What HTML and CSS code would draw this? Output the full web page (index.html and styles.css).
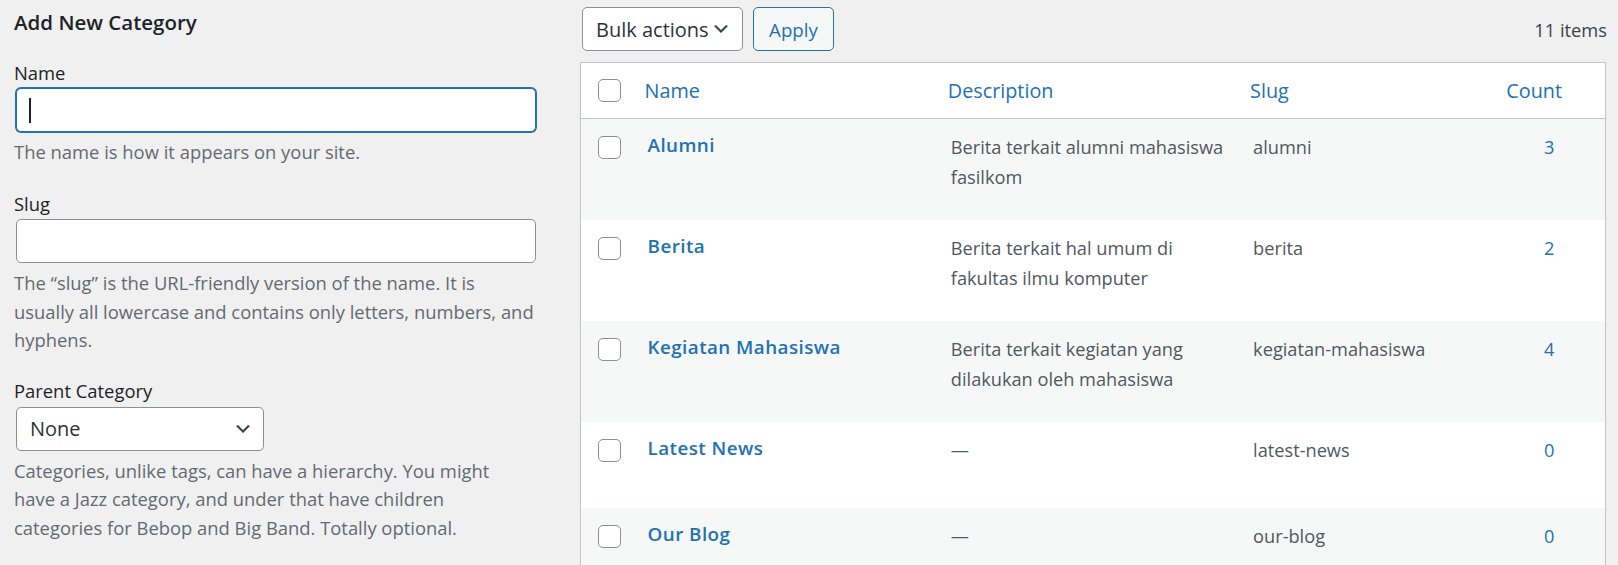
FILE: index.html
```html
<!DOCTYPE html>
<html lang="en">
<head>
<meta charset="utf-8">
<title>Categories</title>
<link rel="stylesheet" href="styles.css">
</head>
<body>
<div class="page">
  <div class="col-left">
    <h2 class="form-title">Add New Category</h2>
    <div class="field">
      <label class="field-label">Name</label>
      <div class="text-input is-focused"><span class="caret"></span></div>
      <p class="desc">The name is how it appears on your site.</p>
    </div>
    <div class="field">
      <label class="field-label">Slug</label>
      <div class="text-input"></div>
      <p class="desc">The “slug” is the URL-friendly version of the name. It is<br>usually all lowercase and contains only letters, numbers, and<br>hyphens.</p>
    </div>
    <div class="field">
      <label class="field-label">Parent Category</label>
      <div class="select select-parent">
        <span>None</span>
        <svg class="chev" viewBox="0 0 20 20" width="20" height="20"><path d="M5 6l5 5 5-5 2 1-7 7-7-7z"/></svg>
      </div>
      <p class="desc">Categories, unlike tags, can have a hierarchy. You might<br>have a Jazz category, and under that have children<br>categories for Bebop and Big Band. Totally optional.</p>
    </div>
  </div>

  <div class="col-right">
    <div class="tablenav">
      <div class="select select-bulk">
        <span>Bulk actions</span>
        <svg class="chev" viewBox="0 0 20 20" width="20" height="20"><path d="M5 6l5 5 5-5 2 1-7 7-7-7z"/></svg>
      </div>
      <button class="btn-apply">Apply</button>
      <div class="items-count">11 items</div>
    </div>

    <table class="terms">
      <colgroup>
        <col class="c-cb"><col class="c-name"><col class="c-desc"><col class="c-slug"><col class="c-count">
      </colgroup>
      <thead>
        <tr>
          <th class="cb"><span class="checkbox"></span></th>
          <th class="th-name">Name</th>
          <th class="th-desc">Description</th>
          <th class="th-slug">Slug</th>
          <th class="th-count">Count</th>
        </tr>
      </thead>
      <tbody>
        <tr class="alt">
          <td class="cb"><span class="checkbox"></span></td>
          <td class="name"><a class="row-title">Alumni</a><div class="row-actions"></div></td>
          <td class="description">Berita terkait alumni mahasiswa<br>fasilkom</td>
          <td class="slug">alumni</td>
          <td class="count">3</td>
        </tr>
        <tr>
          <td class="cb"><span class="checkbox"></span></td>
          <td class="name"><a class="row-title">Berita</a><div class="row-actions"></div></td>
          <td class="description">Berita terkait hal umum di<br>fakultas ilmu komputer</td>
          <td class="slug">berita</td>
          <td class="count">2</td>
        </tr>
        <tr class="alt">
          <td class="cb"><span class="checkbox"></span></td>
          <td class="name"><a class="row-title">Kegiatan Mahasiswa</a><div class="row-actions"></div></td>
          <td class="description">Berita terkait kegiatan yang<br>dilakukan oleh mahasiswa</td>
          <td class="slug">kegiatan-mahasiswa</td>
          <td class="count">4</td>
        </tr>
        <tr>
          <td class="cb"><span class="checkbox"></span></td>
          <td class="name"><a class="row-title">Latest News</a><div class="row-actions"></div></td>
          <td class="description">—</td>
          <td class="slug">latest-news</td>
          <td class="count">0</td>
        </tr>
        <tr class="alt">
          <td class="cb"><span class="checkbox"></span></td>
          <td class="name"><a class="row-title">Our Blog</a><div class="row-actions"></div></td>
          <td class="description">—</td>
          <td class="slug">our-blog</td>
          <td class="count">0</td>
        </tr>
      </tbody>
    </table>
  </div>
</div>
</body>
</html>
```

FILE: styles.css
```css
html, body {
  margin: 0;
  padding: 0;
}
body {
  background: #f0f0f1;
  font-family: "Segoe UI", "Open Sans", "Noto Sans", sans-serif;
  color: #1d2327;
  font-size: 18px;
  overflow: hidden;
}
.page {
  display: flex;
  align-items: flex-start;
  padding: 0 12px 0 14px;
  gap: 44px;
}

/* ---------- left form ---------- */
.col-left {
  width: 522px;
  flex: none;
}
.form-title {
  margin: 8px 0 0;
  font-size: 20.5px;
  line-height: 28px;
  font-weight: 600;
  color: #1d2327;
}
.field {
  margin-top: 23.75px;
}
.field-label {
  display: block;
  font-size: 18.4px;
  line-height: 26px;
  margin-bottom: 2.5px;
  color: #1d2327;
}
.text-input {
  position: relative;
  box-sizing: border-box;
  margin-left: 2px;
  width: 520px;
  height: 44px;
  background: #fff;
  border: 1px solid #8c8f94;
  border-radius: 5px;
}
.text-input.is-focused {
  border-color: #2271b1;
  box-shadow: 0 0 0 1px #2271b1;
}
.caret {
  position: absolute;
  left: 12px;
  top: 9px;
  width: 2px;
  height: 25px;
  background: #1d2327;
}
.desc {
  margin: 6px 0 0;
  font-size: 18.4px;
  line-height: 28.5px;
  color: #646970;
  white-space: nowrap;
}
.select {
  box-sizing: border-box;
  display: flex;
  align-items: center;
  justify-content: space-between;
  height: 44px;
  background: #fff;
  border: 1px solid #8c8f94;
  border-radius: 5px;
  color: #2c3338;
  font-size: 20px;
}
.select-parent {
  margin-left: 2px;
  width: 248px;
  padding: 0 10px 0 13px;
}
.chev {
  width: 20px;
  height: 20px;
  fill: #3c434a;
  flex: none;
}

/* ---------- right list ---------- */
.col-right {
  flex: 1;
  min-width: 0;
}
.tablenav {
  display: flex;
  align-items: center;
  height: 44px;
  margin-top: 7px;
}
.select-bulk {
  margin-left: 2px;
  width: 161px;
  padding: 0 11px 0 13px;
}
.btn-apply {
  box-sizing: border-box;
  margin-left: 10px;
  width: 81px;
  height: 44px;
  border: 1px solid #2271b1;
  border-radius: 5px;
  background: #f6f7f7;
  color: #2271b1;
  font-family: inherit;
  font-size: 18.7px;
  padding: 0;
}
.items-count {
  margin-left: auto;
  margin-right: -1px;
  color: #3c434a;
  font-size: 18.3px;
}

.terms {
  margin-top: 11px;
  width: 100%;
  table-layout: fixed;
  border-collapse: collapse;
  border: 1px solid #c3c4c7;
  background: #fff;
  font-size: 18.2px;
}
.c-cb { width: 54px; }
.c-name { width: 303px; }
.c-desc { width: 302px; }
.c-slug { width: 253px; }
.c-count { width: 112px; }

.terms thead th {
  height: 55px;
  padding: 0 10px;
  text-align: left;
  font-weight: 400;
  font-size: 19.8px;
  color: #2271b1;
  border-bottom: 1px solid #c3c4c7;
  vertical-align: middle;
  white-space: nowrap;
}
.terms thead th.cb {
  padding: 0 0 0 17px;
}
.terms th.th-count {
  text-align: center;
  padding-right: 40px;
  padding-left: 10px;
}
.checkbox {
  display: block;
  box-sizing: border-box;
  width: 23px;
  height: 23px;
  background: #fff;
  border: 1px solid #8c8f94;
  border-radius: 5px;
}
.terms tbody tr {
  background: #fff;
}
.terms tbody tr.alt {
  background: #f6f7f7;
}
.terms tbody td {
  vertical-align: top;
  padding: 13px 13px 13px;
  line-height: 30px;
  color: #50575e;
  white-space: nowrap;
}
.terms tbody td.cb {
  padding: 17px 0 0 17px;
}
.row-title {
  display: block;
  font-weight: 600;
  font-size: 18.8px;
  letter-spacing: 0.45px;
  line-height: 27px;
  color: #2271b1;
}
.row-actions {
  height: 33px;
}
.terms tbody td.description {
  padding-bottom: 28px;
}
.terms tbody td.count {
  text-align: center;
  color: #2271b1;
}
```
